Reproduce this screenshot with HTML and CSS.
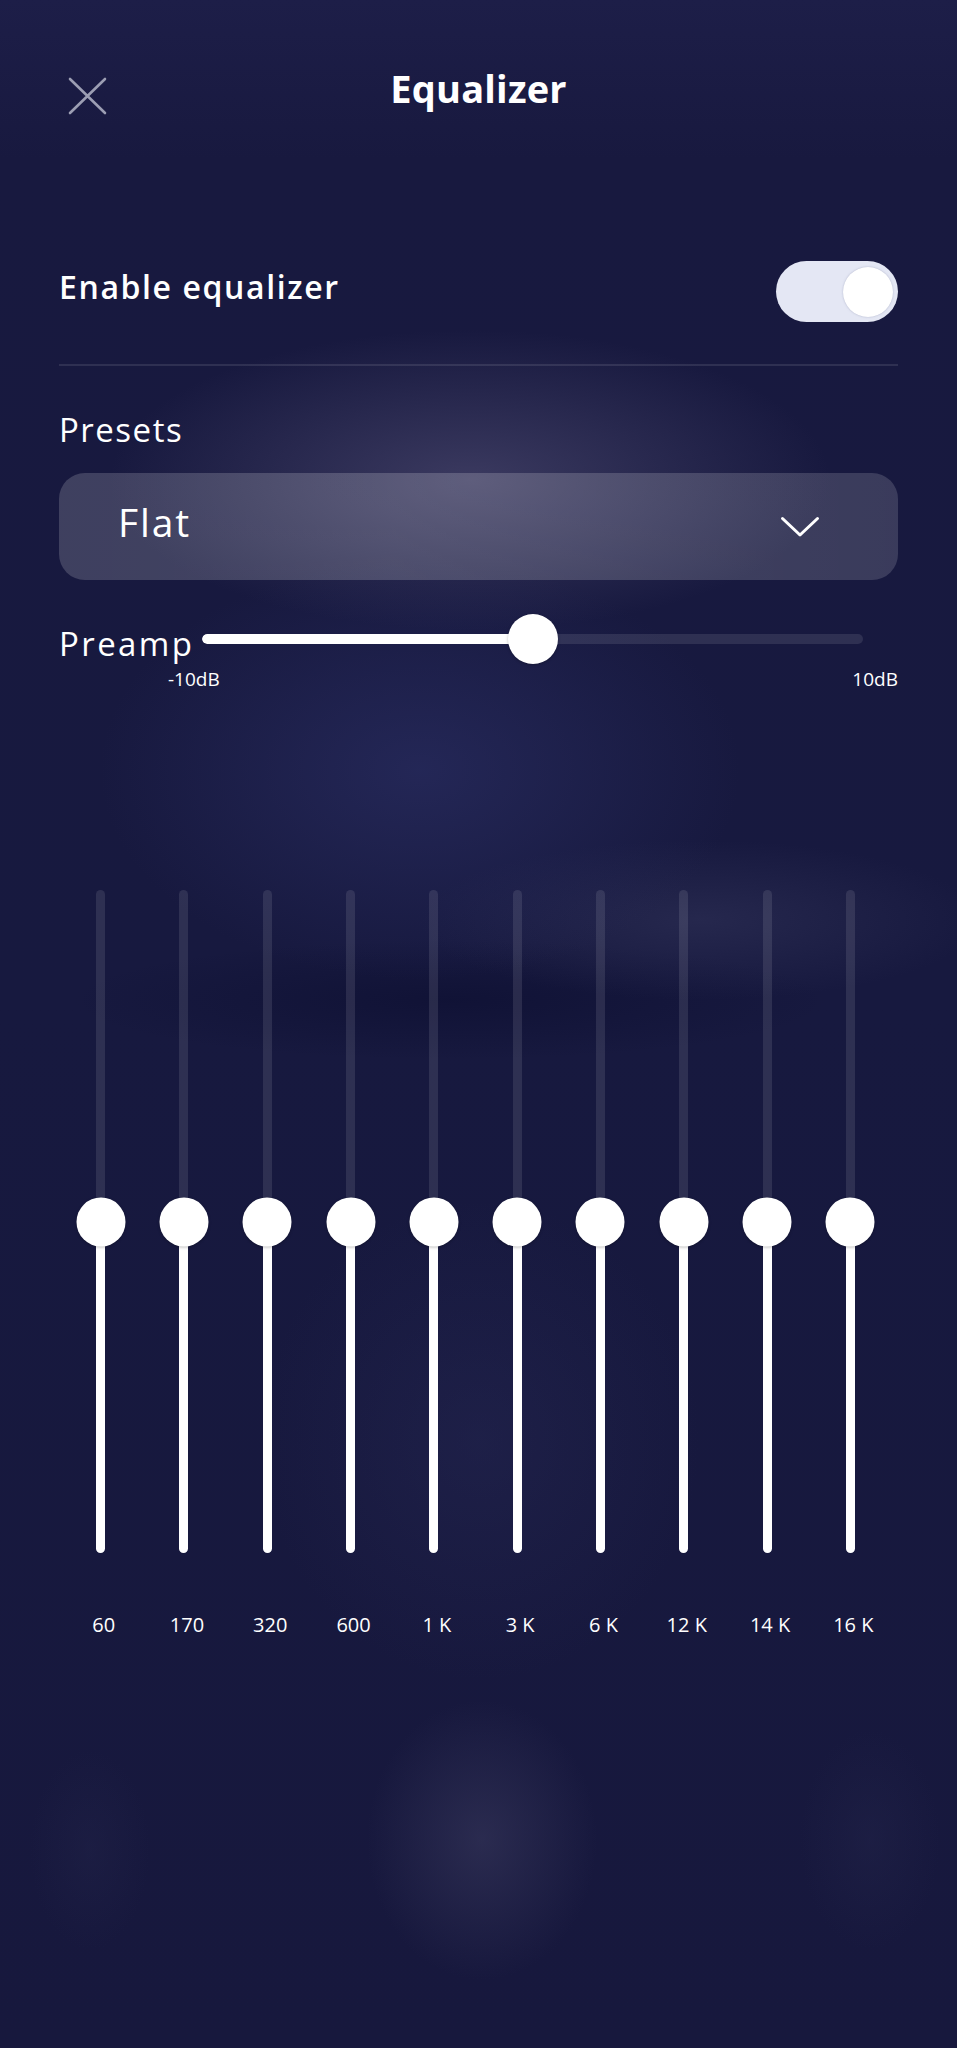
FILE: index.html
```html
<!DOCTYPE html>
<html lang="en">
<head>
<meta charset="utf-8">
<title>Equalizer</title>
<link rel="stylesheet" href="styles.css">
</head>
<body>
<div class="screen">
  <header class="topbar">
    <button class="close" aria-label="Close">
      <svg width="39" height="38" viewBox="0 0 39 38"><path d="M2 2 L37 36 M37 2 L2 36" fill="none" stroke="#9c9eb3" stroke-width="2.6" stroke-linecap="round"/></svg>
    </button>
    <h1 class="title">Equalizer</h1>
    <span class="spacer"></span>
  </header>

  <section class="enable-row">
    <span class="enable-label">Enable equalizer</span>
    <div class="toggle"><span class="toggle-knob"></span></div>
  </section>

  <div class="divider"></div>

  <div class="section-label">Presets</div>
  <div class="select">
    <span class="select-value">Flat</span>
    <svg class="chevron" width="40" height="22" viewBox="0 0 40 22"><path d="M2.5 2.5 L20 19 L37.5 2.5" fill="none" stroke="#ffffff" stroke-width="3" stroke-linecap="round" stroke-linejoin="round"/></svg>
  </div>

  <div class="preamp-row">
    <span class="preamp-label">Preamp</span>
    <div class="hslider">
      <div class="hslider-track"><div class="hslider-fill" style="width:50%"></div></div>
      <span class="hslider-thumb" style="left:50%"></span>
    </div>
  </div>
  <div class="db-row"><span>-10dB</span><span>10dB</span></div>

  <div class="bands">
    <div class="band"><div class="vslider"><div class="vfill" style="height:50%"></div><span class="vthumb" style="bottom:50%"></span></div><span class="band-label">60</span></div>
    <div class="band"><div class="vslider"><div class="vfill" style="height:50%"></div><span class="vthumb" style="bottom:50%"></span></div><span class="band-label">170</span></div>
    <div class="band"><div class="vslider"><div class="vfill" style="height:50%"></div><span class="vthumb" style="bottom:50%"></span></div><span class="band-label">320</span></div>
    <div class="band"><div class="vslider"><div class="vfill" style="height:50%"></div><span class="vthumb" style="bottom:50%"></span></div><span class="band-label">600</span></div>
    <div class="band"><div class="vslider"><div class="vfill" style="height:50%"></div><span class="vthumb" style="bottom:50%"></span></div><span class="band-label">1 K</span></div>
    <div class="band"><div class="vslider"><div class="vfill" style="height:50%"></div><span class="vthumb" style="bottom:50%"></span></div><span class="band-label">3 K</span></div>
    <div class="band"><div class="vslider"><div class="vfill" style="height:50%"></div><span class="vthumb" style="bottom:50%"></span></div><span class="band-label">6 K</span></div>
    <div class="band"><div class="vslider"><div class="vfill" style="height:50%"></div><span class="vthumb" style="bottom:50%"></span></div><span class="band-label">12 K</span></div>
    <div class="band"><div class="vslider"><div class="vfill" style="height:50%"></div><span class="vthumb" style="bottom:50%"></span></div><span class="band-label">14 K</span></div>
    <div class="band"><div class="vslider"><div class="vfill" style="height:50%"></div><span class="vthumb" style="bottom:50%"></span></div><span class="band-label">16 K</span></div>
  </div>
</div>
</body>
</html>
```

FILE: styles.css
```css
* { box-sizing: border-box; }

html, body {
  margin: 0;
  padding: 0;
}

body {
  min-height: 2048px;
  font-family: "Open Sans", "Noto Sans", sans-serif;
  color: #ffffff;
  background:
    radial-gradient(ellipse 360px 150px at 470px 480px, rgba(72, 70, 108, 0.72), rgba(72, 70, 108, 0) 100%),
    radial-gradient(ellipse 320px 210px at 420px 770px, rgba(44, 48, 102, 0.6), rgba(44, 48, 102, 0) 100%),
    radial-gradient(ellipse 280px 80px at 700px 920px, rgba(52, 54, 92, 0.5), rgba(52, 54, 92, 0) 100%),
    radial-gradient(ellipse 380px 60px at 450px 1000px, rgba(12, 14, 48, 0.6), rgba(12, 14, 48, 0) 100%),
    radial-gradient(ellipse 220px 240px at 480px 1440px, rgba(40, 42, 86, 0.4), rgba(40, 42, 86, 0) 100%),
    radial-gradient(ellipse 115px 140px at 482px 1840px, rgba(62, 62, 98, 0.5), rgba(62, 62, 98, 0) 100%),
    radial-gradient(ellipse 60px 100px at 90px 1850px, rgba(36, 38, 76, 0.35), rgba(36, 38, 76, 0) 100%),
    radial-gradient(ellipse 70px 110px at 870px 1840px, rgba(36, 38, 76, 0.4), rgba(36, 38, 76, 0) 100%),
    linear-gradient(180deg, #1d1e48 0px, #18193f 160px, #17193f 1000px, #17183d 2048px);
  background-repeat: no-repeat;
}

.screen {
  padding: 62px 59px 0 59px;
}

/* header */
.topbar {
  display: grid;
  grid-template-columns: 1fr auto 1fr;
  align-items: start;
}

.close {
  justify-self: start;
  margin: 15px 0 0 9px;
  padding: 0;
  border: 0;
  background: none;
  width: 39px;
  height: 38px;
  display: block;
}

.close svg { display: block; }

.title {
  margin: 0;
  font-size: 38px;
  line-height: 52px;
  font-weight: 700;
  letter-spacing: 0.2px;
}

/* enable row */
.enable-row {
  margin-top: 146px;
  height: 61px;
  display: flex;
  align-items: center;
  justify-content: space-between;
}

.enable-label {
  font-size: 32px;
  font-weight: 600;
  line-height: 38px;
  margin-bottom: 10px;
  letter-spacing: 1.6px;
}

.toggle {
  width: 122px;
  height: 61px;
  border-radius: 31px;
  background: #e4e7f4;
  display: flex;
  justify-content: flex-end;
  align-items: center;
  padding-right: 5px;
}

.toggle-knob {
  width: 50px;
  height: 50px;
  border-radius: 50%;
  background: #ffffff;
  box-shadow: 0 0 2px rgba(120, 125, 160, 0.5);
}

.divider {
  margin-top: 42px;
  height: 2px;
  background: rgba(255, 255, 255, 0.1);
}

/* presets */
.section-label {
  margin-top: 44px;
  font-size: 33px;
  line-height: 40px;
  font-weight: 400;
  letter-spacing: 1.5px;
}

.select {
  margin-top: 23px;
  height: 107px;
  border-radius: 26px;
  background: linear-gradient(90deg, rgba(255, 255, 255, 0.17), rgba(255, 255, 255, 0.19) 40%, rgba(255, 255, 255, 0.15));
  display: flex;
  align-items: center;
  justify-content: space-between;
  padding: 0 78px 0 59px;
}

.select-value {
  font-size: 39px;
  line-height: 50px;
  margin-bottom: 10px;
  letter-spacing: 1.9px;
}

.chevron { display: block; }

/* preamp */
.preamp-row {
  margin-top: 34px;
  display: flex;
  align-items: flex-end;
}

.preamp-label {
  flex: 0 0 143px;
  white-space: nowrap;
  font-size: 33px;
  line-height: 40px;
  letter-spacing: 2.4px;
}

.hslider {
  flex: 1;
  margin-right: 35px;
  height: 50px;
  position: relative;
  display: flex;
  align-items: center;
}

.hslider-track {
  width: 100%;
  height: 10px;
  border-radius: 5px;
  background: rgba(255, 255, 255, 0.1);
  overflow: hidden;
}

.hslider-fill {
  height: 100%;
  background: #ffffff;
  border-radius: 5px;
}

.hslider-thumb {
  position: absolute;
  top: 0;
  width: 50px;
  height: 50px;
  margin-left: -25px;
  border-radius: 50%;
  background: #ffffff;
  box-shadow: 0 1px 3px rgba(0, 0, 0, 0.25);
}

.db-row {
  margin: 3px 0 0 109px;
  display: flex;
  justify-content: space-between;
  font-size: 19px;
  line-height: 24px;
}

/* bands */
.bands {
  margin-top: 199px;
  width: 833px;
  display: grid;
  grid-template-columns: repeat(10, 1fr);
}

.band {
  display: flex;
  flex-direction: column;
  align-items: center;
}

.vslider {
  position: relative;
  width: 9px;
  height: 663px;
  border-radius: 5px;
  background: rgba(255, 255, 255, 0.1);
  display: flex;
  flex-direction: column;
  justify-content: flex-end;
}

.vfill {
  width: 100%;
  background: #ffffff;
  border-radius: 5px;
}

.vthumb {
  position: absolute;
  left: 50%;
  width: 49px;
  height: 49px;
  transform: translate(-50%, 50%);
  border-radius: 50%;
  background: #ffffff;
  box-shadow: 0 1px 3px rgba(0, 0, 0, 0.25);
}

.band-label {
  margin-top: 60px;
  padding-left: 6px;
  font-size: 20px;
  line-height: 24px;
  white-space: nowrap;
}
```
